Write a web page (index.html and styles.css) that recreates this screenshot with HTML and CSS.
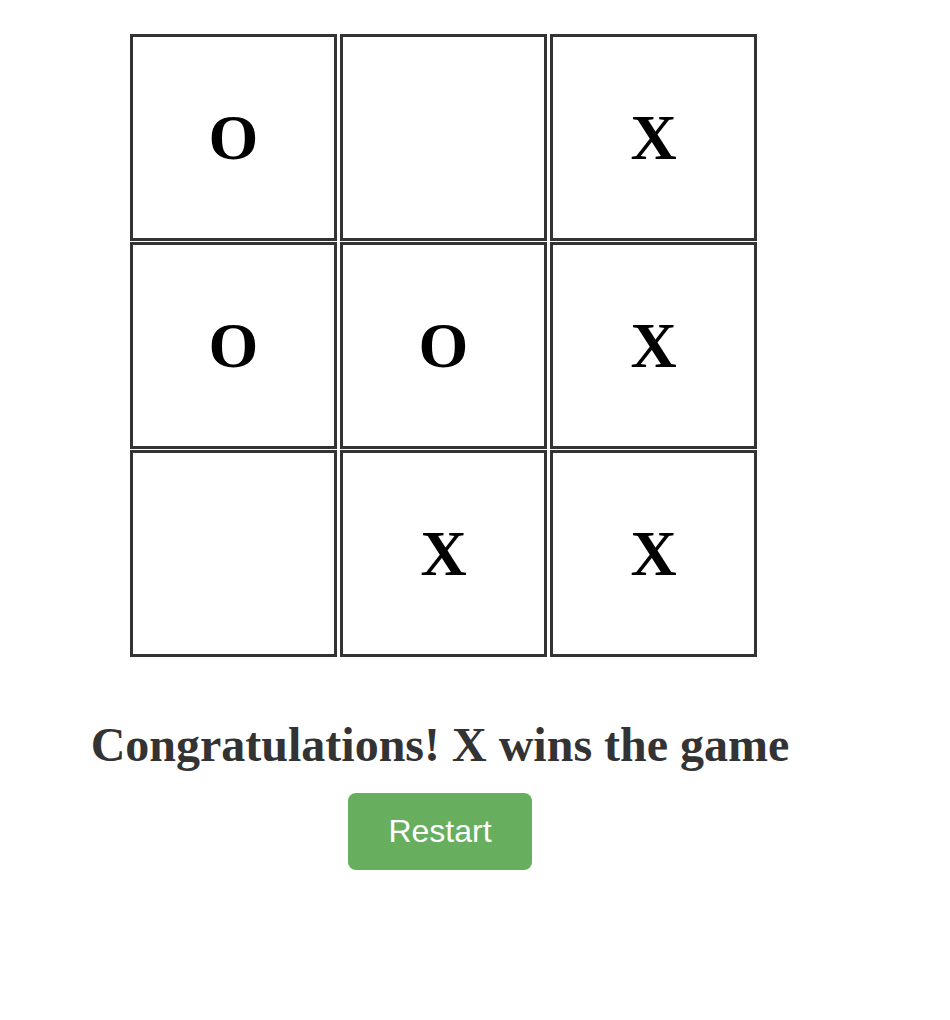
FILE: index.html
```html
<!DOCTYPE html>
<html lang="en">
<head>
<meta charset="utf-8">
<title>Tic Tac Toe</title>
<link rel="stylesheet" href="styles.css">
</head>
<body>
<div class="page">
  <div class="board">
    <div class="cell">O</div>
    <div class="cell"></div>
    <div class="cell">X</div>
    <div class="cell">O</div>
    <div class="cell">O</div>
    <div class="cell">X</div>
    <div class="cell"></div>
    <div class="cell">X</div>
    <div class="cell">X</div>
  </div>
  <h1 class="status">Congratulations! X wins the game</h1>
  <button class="restart">Restart</button>
</div>
</body>
</html>
```
FILE: styles.css
```css
html, body {
  margin: 0;
  padding: 0;
  background: #ffffff;
}
.page {
  width: 880px;
  padding-top: 34px;
  text-align: center;
  font-family: "Liberation Serif", "Times New Roman", serif;
}
.board {
  display: grid;
  grid-template-columns: repeat(3, 207px);
  grid-auto-rows: 207px;
  column-gap: 3px;
  row-gap: 1px;
  margin-left: 130px;
  width: 627px;
}
.cell {
  box-sizing: border-box;
  border: 3px solid #333333;
  display: flex;
  align-items: center;
  justify-content: center;
  font-family: "Liberation Serif", "Times New Roman", serif;
  font-weight: bold;
  font-size: 64px;
  color: #000000;
}
.status {
  margin: 58px 0 0 0;
  font-size: 48px;
  line-height: 60px;
  font-weight: bold;
  color: #333333;
}
.restart {
  margin-top: 18px;
  width: 184px;
  height: 77px;
  border: none;
  border-radius: 8px;
  background: #67ae5f;
  color: #ffffff;
  font-family: "Liberation Sans", Arial, sans-serif;
  font-size: 32px;
  cursor: pointer;
}
```
